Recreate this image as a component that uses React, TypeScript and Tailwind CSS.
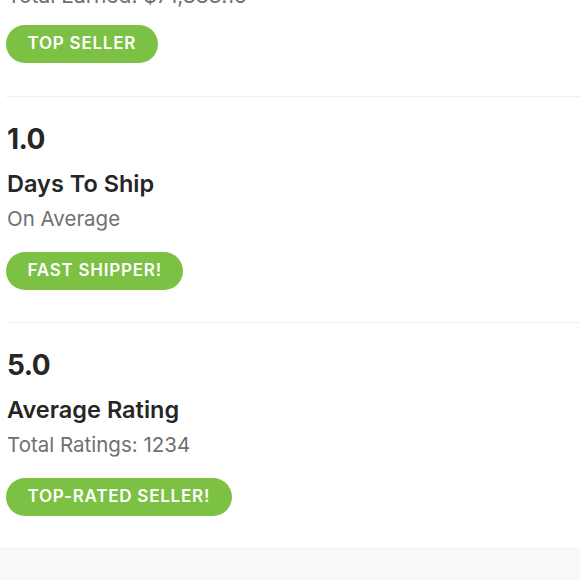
import React from "react";

type Stat = {
  value: string;
  title: string;
  sub: string;
  badge: string;
};

const stats: Stat[] = [
  { value: "1.0", title: "Days To Ship", sub: "On Average", badge: "FAST SHIPPER!" },
  { value: "5.0", title: "Average Rating", sub: "Total Ratings: 1234", badge: "TOP-RATED SELLER!" },
];

const Badge: React.FC<{ label: string }> = ({ label }) => (
  <div className="inline-flex h-[38px] items-center rounded-full bg-[#7cc143] px-[21.5px] text-[17px] font-semibold tracking-[0.045em] text-white">
    {label}
  </div>
);

export default function App() {
  return (
    <div
      className="h-[580px] w-[580px] overflow-hidden bg-white text-[#262626]"
      style={{ fontFamily: "Inter, 'Open Sans', sans-serif" }}
    >
      <div className="pl-[6px]">
        <div className="-mt-[19px] border-b border-[#f0f0f0] pb-[33px]">
          <div className="h-[29px] pl-[1px] text-[21px] leading-[29px] text-[#707070]">
            Total Earned: $71,883.15
          </div>
          <div className="mt-[15px]">
            <Badge label="TOP SELLER" />
          </div>
        </div>

        {stats.map((s, i) => (
          <div
            key={s.value}
            className={
              i === 0
                ? "border-b border-[#f0f0f0] pb-[32px] pt-[26px]"
                : "pb-[32px] pt-[26px]"
            }
          >
            <div className="pl-[1px] text-[28px] font-bold leading-[32px] tracking-[-0.02em]">
              {s.value}
            </div>
            <div className="mt-[14px] pl-[1px] text-[23.5px] font-semibold leading-[30px]">
              {s.title}
            </div>
            <div className="mt-[6px] pl-[1px] text-[20.5px] leading-[28px] text-[#707070]">
              {s.sub}
            </div>
            <div className="mt-[19px]">
              <Badge label={s.badge} />
            </div>
          </div>
        ))}
      </div>
      <div className="h-[40px] border-t border-[#f3f3f3] bg-[#f9f9f9]" />
    </div>
  );
}
